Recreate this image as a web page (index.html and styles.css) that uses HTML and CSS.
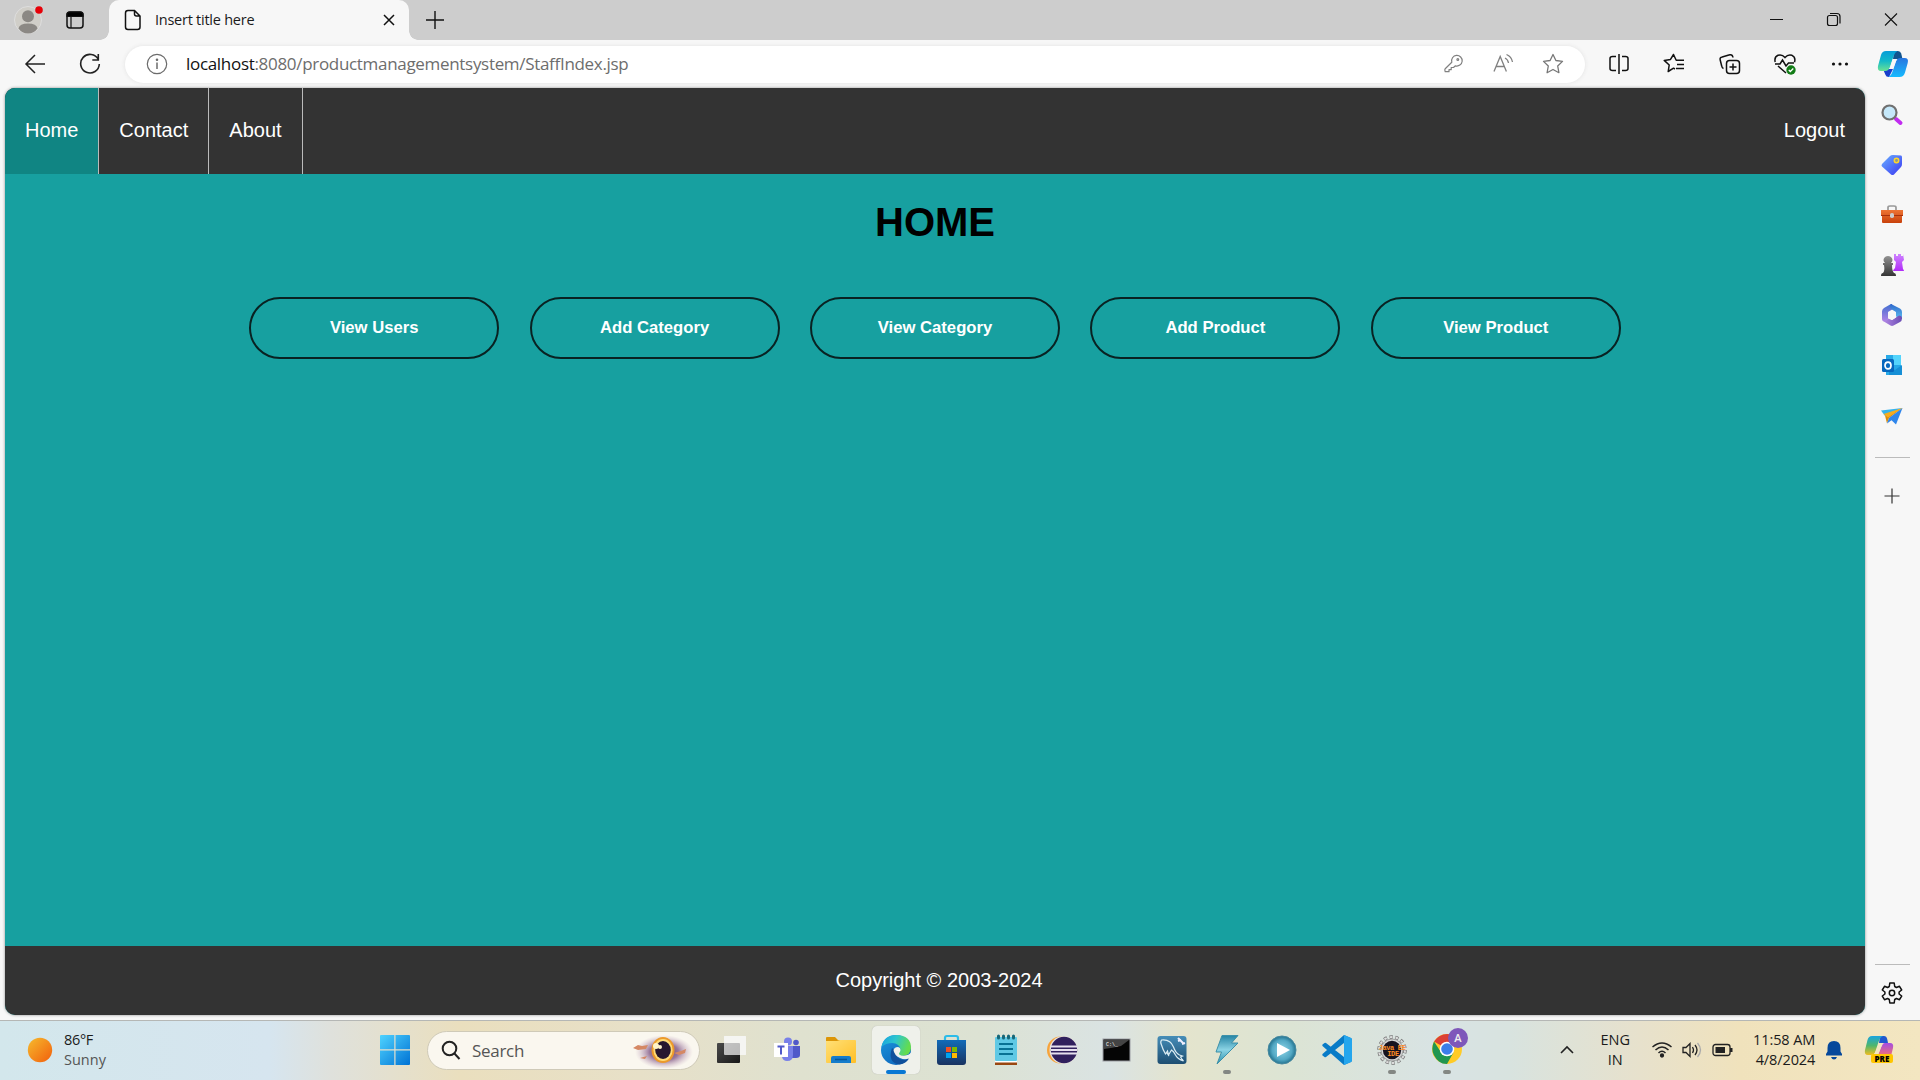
FILE: index.html
```html
<!DOCTYPE html>
<html lang="en">
<head>
<meta charset="utf-8">
<title>Insert title here</title>
<link rel="stylesheet" href="styles.css">
</head>
<body>
<svg class="defs" width="0" height="0" aria-hidden="true">
  <defs>
    <linearGradient id="sun" x1="0" y1="0" x2="1" y2="1"><stop stop-color="#f6bb2e"/><stop offset="1" stop-color="#f25f0c"/></linearGradient>
    <linearGradient id="win" gradientUnits="userSpaceOnUse" x1="0" y1="0" x2="30" y2="30"><stop stop-color="#4fd3ff"/><stop offset="1" stop-color="#0072d4"/></linearGradient>
    <linearGradient id="cyan" x1="0" y1="0" x2="0" y2="1"><stop stop-color="#079dd8"/><stop offset=".5" stop-color="#13b9c9"/><stop offset="1" stop-color="#6be294"/></linearGradient>
    <linearGradient id="blue" x1="0" y1="0" x2="0" y2="1"><stop stop-color="#2875df"/><stop offset="1" stop-color="#16bbff"/></linearGradient>
    <linearGradient id="tag" x1="0" y1="0" x2="1" y2="1"><stop stop-color="#69b1ff"/><stop offset="1" stop-color="#3b36f2"/></linearGradient>
    <linearGradient id="orange" x1="0" y1="0" x2="0" y2="1"><stop stop-color="#ee7434"/><stop offset="1" stop-color="#c8410b"/></linearGradient>
    <linearGradient id="grey" x1="0" y1="0" x2="0" y2="1"><stop stop-color="#929292"/><stop offset="1" stop-color="#353535"/></linearGradient>
    <linearGradient id="purple" x1="0" y1="0" x2="0" y2="1"><stop stop-color="#ce84ff"/><stop offset="1" stop-color="#b12cf8"/></linearGradient>
    <linearGradient id="officeLeft" x1="0" y1="0" x2="0" y2="1"><stop stop-color="#3f6fd0"/><stop offset="1" stop-color="#b083e6"/></linearGradient>
    <linearGradient id="officeRight" x1="0" y1="0" x2="0" y2="1"><stop stop-color="#2f68cc"/><stop offset="1" stop-color="#5cc0f0"/></linearGradient>
    <linearGradient id="officeBottom" x1="0" y1="0" x2="1" y2="0"><stop stop-color="#b58ae6"/><stop offset="1" stop-color="#6a4cb4"/></linearGradient>
    <linearGradient id="folder" x1="0" y1="0" x2="1" y2="1"><stop stop-color="#ffe078"/><stop offset="1" stop-color="#ffbf25"/></linearGradient>
    <linearGradient id="edgeGreen" x1="0" y1="0" x2="1" y2=".3"><stop stop-color="#159fe2"/><stop offset=".5" stop-color="#2dc6cd"/><stop offset="1" stop-color="#64dc4e"/></linearGradient>
    <linearGradient id="edgeBlue" x1="0" y1="0" x2=".6" y2="1"><stop stop-color="#1b98de"/><stop offset="1" stop-color="#0f68bd"/></linearGradient>
    <linearGradient id="store" x1="0" y1="0" x2="0" y2="1"><stop stop-color="#126bb8"/><stop offset="1" stop-color="#193361"/></linearGradient>
    <linearGradient id="sea" x1="0" y1="0" x2="0" y2="1"><stop stop-color="#468db8"/><stop offset="1" stop-color="#1d4e72"/></linearGradient>
    <linearGradient id="bolt" x1="0" y1="0" x2="0" y2="1"><stop stop-color="#2584a4"/><stop offset=".5" stop-color="#8bd3e4"/><stop offset="1" stop-color="#2a90ad"/></linearGradient>
    <linearGradient id="pre" x1="0" y1="0" x2="0" y2="1"><stop stop-color="#19a4df"/><stop offset=".5" stop-color="#4eb66d"/><stop offset="1" stop-color="#f0bd20"/></linearGradient>
    <linearGradient id="preRight" x1="0" y1="0" x2="0" y2="1"><stop stop-color="#a44ce4"/><stop offset="1" stop-color="#f37370"/></linearGradient>
    <linearGradient id="shade" x1="0" y1="0" x2="1" y2="1"><stop stop-color="#4a4a4a"/><stop offset="1" stop-color="#181818"/></linearGradient>
    <radialGradient id="play"><stop stop-color="#8fd6e8"/><stop offset=".7" stop-color="#53a8c4"/><stop offset="1" stop-color="#23728e"/></radialGradient>
    <radialGradient id="haze"><stop stop-color="#5d3562"/><stop offset=".5" stop-color="#8f6a92" stop-opacity=".9"/><stop offset="1" stop-color="#cdb3c8" stop-opacity="0"/></radialGradient>
  </defs>
</svg>

<header class="tabstrip">
  <svg class="avatar" width="32" height="36" viewBox="0 0 32 36"><circle cx="14" cy="20" r="13.500" fill="#d0cec8" stroke="#dedede"/><circle cx="14" cy="16.300" r="6" fill="#8b8884"/><path d="M4.500 28.500q1-5 9.500-5t9.500 5q-3.500 5-9.500 5t-9.500-5" fill="#8b8884"/><circle cx="25" cy="10" r="3.800" fill="#e60008"/></svg>
  <svg class="workspaces" width="20" height="20" viewBox="0 0 20 20"><rect x="2" y="2" width="16" height="16" rx="3" fill="none" stroke="#111" stroke-width="1.500"/><path d="M2 6.500v-2Q2 2 4.500 2h11Q18 2 18 4.500v2zM6 6v12" stroke="#111" stroke-width="1.200"/></svg>
  <div class="tab">
    <svg width="18" height="22" viewBox="0 0 18 22" fill="none" stroke="#111" stroke-width="1.500"><path d="M4 1.500h6.500L16 7v11q0 2.500-2.500 2.500H4Q1.500 20.500 1.500 18V4Q1.500 1.500 4 1.500zM10.500 1.500V5q0 2 2 2H16"/></svg>
    <span class="tab-title">Insert title here</span>
    <svg width="12" height="12" viewBox="0 0 12 12" stroke="#111" stroke-width="1.500"><path d="m1 1 10 10M11 1 1 11"/></svg>
  </div>
  <svg class="newtab" width="18" height="18" viewBox="0 0 18 18" stroke="#111" stroke-width="1.400"><path d="M9 0v18M0 9h18"/></svg>
  <div class="window-controls">
    <svg width="57" height="40" viewBox="0 0 57 40" fill="none" stroke="#111"><path d="M21 19.500h13"/></svg>
    <svg width="57" height="40" viewBox="0 0 57 40" fill="none" stroke="#111" stroke-width="1.200"><rect x="21.500" y="15.500" width="10" height="10" rx="2"/><path d="M24 13.500h7q3 0 3 3v7"/></svg>
    <svg width="57" height="40" viewBox="0 0 57 40" fill="none" stroke="#111" stroke-width="1.100"><path d="m22 13.500 12 12m0-12-12 12"/></svg>
  </div>
</header>

<div class="toolbar">
  <svg class="back" width="22" height="20" viewBox="0 0 22 20" fill="none" stroke="#222" stroke-width="1.500"><path d="M21 10H2m9-9-9 9 9 9"/></svg>
  <svg class="reload" width="22" height="22" viewBox="0 0 22 22" fill="none" stroke="#222" stroke-width="1.600"><path d="M19.300 6.500A9.300 9.300 0 1 0 20.300 11M19.300 1v6h-6"/></svg>
  <div class="address">
    <svg width="22" height="22" viewBox="0 0 22 22" fill="none" stroke="#6b6b6b" stroke-width="1.200"><circle cx="11" cy="11" r="9.700"/><path d="M11 9.500V16" stroke-width="1.500"/><circle cx="11" cy="6.800" r=".7" fill="#666"/></svg>
    <span class="url"><span class="host">localhost</span>:8080/productmanagementsystem/StaffIndex.jsp</span>
    <svg class="tool" width="22" height="22" viewBox="0 0 22 22" fill="none" stroke="#808080" stroke-width="1.200" stroke-linejoin="round"><path d="M9.800 9.200a5.300 5.300 0 1 1 3.600 3.600L11.500 14.500H9.200v2.200H7v2H3.200q-.8-2 0-3z"/><circle cx="15.800" cy="6.500" r=".9"/></svg>
    <svg class="tool" width="22" height="22" viewBox="0 0 22 22" fill="none" stroke="#808080" stroke-width="1.300"><path d="m2 18.500 6.200-15 6.200 15M4.200 13.500h8M13 5q3 1.500 3.500 5M14.500 1.500q5 2 6 7.500"/></svg>
    <svg class="tool" width="22" height="22" viewBox="0 0 22 22" fill="none" stroke="#777" stroke-width="1.300" stroke-linejoin="round"><path d="m11 1.500 2.900 6 6.600.9-4.800 4.600 1.200 6.700-5.900-3.200-5.900 3.200 1.200-6.700L1.500 8.400l6.600-.9z"/></svg>
  </div>
  <div class="actions">
    <svg width="22" height="22" viewBox="0 0 22 22" fill="none" stroke="#111" stroke-width="1.500"><path d="M8 3.500H4.500q-2.500 0-2.500 2v10q0 2 2.500 2H8M14 3.500h3.500q2.500 0 2.500 2v10q0 2-2.500 2H14M11 1v20"/></svg>
    <svg width="22" height="22" viewBox="0 0 22 22" fill="none" stroke="#111" stroke-width="1.500" stroke-linejoin="round"><path d="m12 16-1.500-.8-5.300 3.300 1-6.500-5-4.600 6.300-1L10.500 1.500l2.700 5.800H21M14 11.500h7M13 15.500h8"/></svg>
    <svg width="22" height="22" viewBox="0 0 22 22" fill="none" stroke="#111" stroke-width="1.500"><rect x="7.500" y="7.500" width="13" height="13" rx="3"/><path d="M14 10.500v7m-3.500-3.500h7M4.500 15.500Q3 15 2.700 13L1.200 7q-.7-2.500 2-3L9 2.300l2-.5q2.500-.3 3 2.700"/></svg>
    <svg width="22" height="22" viewBox="0 0 22 22" fill="none" stroke="#111" stroke-width="1.500"><path d="M1.200 9Q0 4 4 2.300 8 1 11 4.500 14 1 18 2.300q4 2 2.500 7M1 11h5l2.500-4 3.500 6 2.500-3H20M4 13l8 7"/><circle cx="17" cy="17" r="4.700" fill="#127c16" stroke="none"/><path d="m14.800 17 1.500 1.500 3-3" stroke="#fff" stroke-width="1.300"/></svg>
    <svg width="22" height="22" viewBox="0 0 22 22" fill="#111"><circle cx="4.500" cy="11" r="1.600"/><circle cx="11" cy="11" r="1.600"/><circle cx="17.500" cy="11" r="1.600"/></svg>
  </div>
  <svg class="copilot" width="32" height="28" viewBox="0 0 32 28"><path d="M17 1h4q2.500 0 3.200 2.500L25.500 9H16z" fill="#12548f"/><path d="M6 19h10l-4 8q-3 0-3.700-2.500z" fill="#173fcb"/><path d="M9 1h11.500Q18 2 16.800 5.500L13 17q-1.200 4-5 4H4q-4 0-3-5L4 5Q5.200 1 9 1z" fill="url(#cyan)"/><path d="M23 8h4.500q4.500 0 3.200 5L28 22.500Q26.700 27 22.500 27h-11q2.500-1 3.700-4.500L19 11.500Q20 8 23 8z" fill="url(#blue)"/><path d="M15.500 9.500H20q-1 1-2 4l-2 5.500h-4q1-1 1.700-3.500z" fill="#f7f7f7"/></svg>
</div>

<main class="workspace">
  <section class="page">
    <nav class="nav"><a class="active">Home</a><a>Contact</a><a>About</a><a class="logout">Logout</a></nav>
    <div class="content">
      <h1>HOME</h1>
      <div class="buttons"><button>View Users</button><button>Add Category</button><button>View Category</button><button>Add Product</button><button>View Product</button></div>
    </div>
    <footer class="footer">Copyright © 2003-2024</footer>
  </section>
  <aside class="sidebar">
    <svg width="24" height="24" viewBox="0 0 24 24"><path d="m16 16 4.500 4" stroke="#c12cf0" stroke-width="4" stroke-linecap="round"/><circle cx="9.500" cy="9.500" r="7" fill="#c5e8fa" stroke="#707070" stroke-width="2.200"/></svg>
    <svg width="24" height="24" viewBox="0 0 24 24"><path d="m2 11 8-8q1-1 3-1l8 .5q1 0 1 2V11q0 2-1 3l-7 7.500q-1.500 1-3 0l-9-8q-1-1 0-2.500z" fill="url(#tag)"/><circle cx="16.500" cy="7.500" r="2.200" fill="#8d9c8b" stroke="#ffd52c" stroke-width="1.500"/></svg>
    <svg width="24" height="24" viewBox="0 0 24 24"><path d="M8 7V4.500Q8 3 10 3h4q2 0 2 1.500V7" fill="none" stroke="#999" stroke-width="1.700"/><path d="M1 7h22v5l-1 1v6q0 1-1 1H3q-1 0-1-1v-6l-1-1z" fill="url(#orange)"/><path d="M1 12.500h22" stroke="#a9310c"/><rect x="10" y="10" width="4" height="5" rx="1.800" fill="#ccc"/></svg>
    <svg width="24" height="24" viewBox="0 0 24 24"><path d="M14 1h2v2h2V1h3v2h2V1l1 6-2 2 1 7q1 1 1 2H13q0-1 2-3l1-6-2-2z" fill="url(#purple)"/><path d="M4 12H3v-2h2Q2 7 5 4q3-2 6 0 3 3 0 6h2v2h-1q0 6 2 8 2 0 2 3H1q0-3 2-3 2-2 1-8z" fill="url(#grey)"/></svg>
    <svg width="24" height="24" viewBox="0 0 24 24"><path d="M11 1 4 5Q2 6.200 2 8.500V16q0 2.500 3 2.500 2.500 0 3-3V9l5-3-1-5z" fill="url(#officeLeft)"/><path d="m11 1 9 4.500q2 1.200 2 3.500v7l-6-2.500V9l-5-3q-2-3 0-5z" fill="url(#officeRight)"/><path d="m3 18 7.500 4.500q1.500.8 3 0L20 19q2-1.200 2-3.500 0-3-3-3l-7 4.500-4-1.500q-1 3-5 2.500z" fill="url(#officeBottom)"/><path d="m12 7.500 4 2.300v4.700l-4 2.500-4-2.500V9.800z" fill="#f7f7f7"/></svg>
    <svg width="24" height="24" viewBox="0 0 24 24"><path d="M6 2h15v20H6z" fill="#27a9e7"/><path d="M13 2h8v10h-8z" fill="#54d4fc"/><path d="m9 14 6 3 7-5v10H9z" fill="#168fd6"/><rect x="2" y="6" width="12" height="13" rx="1.500" fill="#0868be"/><ellipse cx="8" cy="12.500" rx="3" ry="3.400" fill="none" stroke="#fff" stroke-width="1.700"/></svg>
    <svg width="24" height="24" viewBox="0 0 24 24"><path d="M1 6.500 22.500 4 5 12z" fill="#35b3ee"/><path d="M5 11.500 22.500 4 9 14l-2 5.500z" fill="#d98d10"/><path d="M3.500 10 22.500 4 8 13.500z" fill="#f5ac20"/><path d="M22.500 4 16 20.500l-4.500-4.200L7 19.500 9 14z" fill="#2f86ec"/></svg>
    <i class="divider"></i>
    <svg class="plus" width="16" height="16" viewBox="0 0 16 16" stroke="#333" stroke-width="1.200"><path d="M8 .5v15M.5 8h15"/></svg>
    <i class="divider lower"></i>
    <svg class="gear" width="22" height="22" viewBox="0 0 22 22" fill="none" stroke="#111" stroke-width="1.500" stroke-linejoin="round"><path d="M8.800 1h4.400l.5 3.500 1.700 1 3.100-1.200 2.200 3.700-2.600 2v2l2.600 2-2.200 3.700-3.100-1.200-1.700 1-.5 3.500H8.800l-.5-3.500-1.700-1-3.100 1.200-2.200-3.700 2.600-2v-2l-2.600-2 2.200-3.700 3.100 1.200 1.700-1z"/><circle cx="11" cy="11" r="2.700"/></svg>
  </aside>
</main>

<footer class="taskbar">
  <div class="weather"><svg width="26" height="26" viewBox="0 0 26 26"><circle cx="13" cy="13" r="12.200" fill="url(#sun)"/></svg><p><span>86°F</span><span class="muted">Sunny</span></p></div>
  <svg class="start" width="30" height="30" viewBox="0 0 30 30" fill="url(#win)"><path d="M0 1q0-1 1-1h13.300v14.300H0zM15.500 0H29q1 0 1 1v13.300H15.500zM0 15.500h14.300V30H1q-1 0-1-1zM15.500 15.500H30V29q0 1-1 1H15.500z"/></svg>
  <div class="search"><svg width="20" height="20" viewBox="0 0 20 20" fill="none" stroke="#222" stroke-width="2"><circle cx="8.500" cy="8.500" r="6.800"/><path d="m13 13 5.500 6"/></svg><span>Search</span>
    <svg class="eye" width="64" height="36" viewBox="0 0 64 36"><ellipse cx="34" cy="20" rx="29" ry="17" fill="url(#haze)"/><path d="M3 16l5-3 4 1 6-1-2 4-8 1zM44 21l7-2 5-2-1 4-6 2zM10 26l7-2-2 3z" fill="#d58864"/><ellipse cx="33" cy="18" rx="11.500" ry="13" fill="#ec9a2b"/><ellipse cx="33" cy="18" rx="9.600" ry="11" fill="#ffdb78"/><ellipse cx="33" cy="18" rx="7.800" ry="9" fill="#27172f"/><circle cx="26" cy="14" r="3" fill="#fff3c8"/><circle cx="30" cy="15" r="2" fill="#fff3c8"/></svg></div>
  <div class="apps">
    <span><svg width="32" height="32" viewBox="0 0 32 32"><rect x="2" y="9" width="23" height="20" rx="1" fill="url(#shade)"/><rect x="9" y="2" width="22" height="19" rx="1" fill="#f4f4f4" fill-opacity=".72"/><path d="M25 2h6v19h-6zM9 2h22v7H9z" fill="#f7f7f7" fill-opacity=".65"/></svg></span>
    <span><svg width="32" height="32" viewBox="0 0 32 32"><circle cx="18" cy="7.500" r="4" fill="#7880e8"/><circle cx="26" cy="8.500" r="2.800" fill="#5059c9"/><path d="M20 12h10v9q0 3-4 3h-6z" fill="#5059c9"/><path d="M13 12h10v9q0 6-6 6-4 0-5-4z" fill="#7880e8"/><rect x="4" y="9" width="14" height="14" fill="#fff"/><path d="M7.500 12.500h7M11 12.500v8" stroke="#5059c9" stroke-width="2"/></svg></span>
    <span><svg width="32" height="32" viewBox="0 0 32 32"><path d="M1 4q0-1 1-1h8l3 3h17v7H1z" fill="#dc9608"/><path d="M1 7h11l3-1h15q1 0 1 1v21q0 1-1 1H2q-1 0-1-1z" fill="url(#folder)"/><path d="M6 29v-5q0-2 2-2h16q2 0 2 2v5z" fill="#157ccb"/><path d="M10 25.500h12" stroke="#075798" stroke-width="1.500"/></svg></span>
    <span class="active"><svg width="32" height="32" viewBox="0 0 32 32"><circle cx="16" cy="16" r="15" fill="url(#edgeBlue)"/><path d="M12 14q-5 15 8 16.500 6-1 9-6-5 2.500-9 .5-5-3-4.500-8z" fill="#0f509c"/><path d="M13.500 16q1-3 4.500-3 3 .500 3 3.500 0 1.500-1 2.500-.5 2.500 4 2.500 5 0 7-3V24l-2 .300q-4 2-9-.300-6-3-6.500-8z" fill="#eff1eb"/><path d="M1.500 13Q3.500 1 16.500 1 31 1.500 31 14q-.5 7.500-8 7.500-4 0-4-2 2-2.500 1.500-4.500-1.500-5.500-8-6-7 0-11 4z" fill="url(#edgeGreen)"/></svg><i></i></span>
    <span><svg width="32" height="32" viewBox="0 0 32 32"><path d="M10 7V4q0-2 2-2h9q2 0 2 2v3" fill="none" stroke="#2bbce9" stroke-width="2.200"/><path d="M2 6h29v22q0 3-3 3H5q-3 0-3-3z" fill="url(#store)"/><path d="M11 13h5v5h-5z" fill="#f25022"/><path d="M17 13h5v5h-5z" fill="#7fba00"/><path d="M11 19h5v5h-5z" fill="#00a4ef"/><path d="M17 19h5v5h-5z" fill="#ffb900"/></svg></span>
    <span><svg width="32" height="32" viewBox="0 0 32 32"><path d="M5 26h22v5H5z" fill="#994711"/><path d="M5 25h22v3.500H5z" fill="#fff"/><rect x="5" y="3" width="22" height="24" rx="1" fill="#60c9e5"/><path d="M9 10h14M9 15h14M9 20h14" stroke="#087294" stroke-width="1.800"/><path d="M8.500 2v2m5-2v2m5-2v2m5-2v2" stroke="#176778" stroke-width="3" stroke-linecap="round"/></svg></span>
    <span><svg width="32" height="32" viewBox="0 0 32 32"><circle cx="14.500" cy="16" r="13.500" fill="#f7a43b"/><circle cx="17.500" cy="16" r="14" fill="#e7e3dc"/><circle cx="18" cy="16" r="13.200" fill="#30205d"/><path d="M5 12.500h26M5 16h26M5 19.500h26" stroke="#e6e0ee" stroke-width="1.800"/></svg></span>
    <span><svg width="32" height="32" viewBox="0 0 32 32"><rect x="2" y="5" width="27" height="22" fill="#050505" stroke="#9b9da3"/><path d="M3 6h25l-8 6q-9 2-17 3z" fill="#444"/><text x="5" y="12" fill="#fff" font-size="5" font-family="Liberation Mono">C:\_</text></svg></span>
    <span><svg width="32" height="32" viewBox="0 0 32 32"><rect x="1.500" y="2" width="29" height="28" rx="3" fill="url(#sea)"/><path d="M5.500 6q9-1 12 7 2 6 6 8l3 1-2 1q2 3 3 4-6-2-8-6-2-4-4-5l-3 5-1-4-2 3Q7 16 5.500 11 4 8 5.500 6zM11 19l2 3" fill="none" stroke="#dcedf4" stroke-width="1.200"/><path d="m22 4 5 5m-5-2 3-1m1 4 3-1" stroke="#eef" stroke-width="2"/></svg></span>
    <span><svg width="32" height="32" viewBox="0 0 32 32"><path d="M11 1.500h16l-6.500 7.500H27L6 30l4.500-12H5z" fill="url(#bolt)" stroke="#3d91aa"/></svg><i></i></span>
    <span><svg width="32" height="32" viewBox="0 0 32 32"><circle cx="16" cy="16" r="14" fill="url(#play)" stroke="#4789a0"/><path d="m11 9 13 7-13 7z" fill="#fff"/></svg></span>
    <span><svg width="32" height="32" viewBox="0 0 32 32"><path d="m23 1 7 3q1 .5 1 2v20q0 1.500-1 2l-7 3L1.500 12q-.5-1 0-1.500L3.500 9q1-.500 1.500 0L23 23V9L5 23q-1 .500-1.500 0l-2-1.500q-.5-.5 0-1.500z" fill="#087bc7"/><path d="m23 1 7 3q1 .5 1 2v20q0 1.500-1 2l-7 3z" fill="#25a6ed"/></svg></span>
    <span><svg width="32" height="32" viewBox="0 0 32 32"><circle cx="16" cy="16" r="13" fill="none" stroke="#777" stroke-width="3.500" stroke-dasharray="3.300 2.535"/><circle cx="16" cy="16" r="13" fill="none" stroke="#ddd" stroke-width="2" stroke-dasharray="2.500 3.335" stroke-dashoffset="-.4"/><circle cx="16" cy="16" r="11" fill="#d8d8d8" stroke="#888" stroke-width=".7"/><circle cx="16" cy="16" r="9.200" fill="#17131f"/><text class="ide" x="16" y="15.500" text-anchor="middle">Java EE</text><text class="ide" x="17" y="21.500" text-anchor="middle">IDE</text></svg><i></i></span>
    <span><svg class="chrome" width="40" height="38" viewBox="0 0 40 38"><circle cx="16" cy="22" r="15" fill="#ffcb27"/><path d="M16 22 3 14.500Q8 7 16 7q9 0 13 7.500z" fill="#dc4035"/><path d="M3 14.500Q-2 26 8 34.500q3 2.500 8 2.500l6.500-11.500-12 .500z" fill="#209650"/><circle cx="16" cy="22" r="7.300" fill="#fff"/><circle cx="16" cy="22" r="5.800" fill="#3b7eea"/><circle cx="27" cy="11" r="10" fill="#7e57ba"/><text x="27" y="15" text-anchor="middle" fill="#eee" font-family="Open Sans" font-weight="600" font-size="11">A</text></svg><i></i></span>
  </div>
  <div class="tray">
    <svg width="16" height="12" viewBox="0 0 16 12" fill="none" stroke="#222" stroke-width="1.600"><path d="m2 9 6-6 6 6"/></svg>
    <p class="language"><span>ENG</span><span>IN</span></p>
    <svg class="wifi" width="22" height="18" viewBox="0 0 22 18" fill="none" stroke="#222" stroke-width="1.500"><path d="M1.500 6Q11-2 20.500 6M4.500 9Q11 3 17.500 9M7.500 12Q11 8.500 14.500 12"/><circle cx="11" cy="14.500" r="1.400" fill="#222"/></svg>
    <svg class="sound" width="20" height="18" viewBox="0 0 20 18" fill="none" stroke="#222" stroke-width="1.300"><path d="M1 6.500v5h3l4 4v-13l-4 4zM10.500 6q2 3 0 6M13 4q4 5 0 10"/><path d="M15.500 2q6 7 0 14" stroke="#aaa"/></svg>
    <svg class="battery" width="21" height="14" viewBox="0 0 21 14"><rect x="1" y="1.500" width="17" height="11" rx="2.500" fill="none" stroke="#222" stroke-width="1.300"/><rect x="3.500" y="4" width="9.500" height="6" fill="#222"/><path d="M18 5h2.500v4H18" fill="#222"/></svg>
    <p class="clock"><span>11:58 AM</span><span>4/8/2024</span></p>
    <svg class="bell" width="18" height="20" viewBox="0 0 18 20" fill="#06489b"><path d="M1 15.500V14l1.500-2.500V8Q2.500 1 9 1t6.500 7v3.500L17 14v1.500zM6 17h6q-1 2.500-3 2.500T6 17"/></svg>
    <svg class="preview" width="32" height="30" viewBox="0 0 32 30"><path d="M16 1h4q2.500 0 3.200 3L24 8h-9z" fill="#2058cf"/><path d="M8 1h11q-3 1-4.500 6l-3 9q-1 4-4.500 4H4q-4 0-3-5L3.500 5Q4.500 1 8 1z" fill="url(#pre)"/><path d="M21 8h5q4 0 3 5l-2 8H12q3-2 4-6l1.500-3.500Q18.500 8 21 8z" fill="url(#preRight)"/><path d="M14.500 9.500h4.300q-1.300 1-2 3.500L14.500 19h-4z" fill="#f4e6c2"/><rect x="7" y="19" width="22" height="9" rx="2" fill="#ffc600"/><text x="18" y="26.500" text-anchor="middle" font-family="Open Sans" font-size="8" font-weight="800">PRE</text></svg>
  </div>
</footer>
</body>
</html>
```
FILE: styles.css
```css
* { box-sizing: border-box; }
body { margin: 0; width: 1920px; height: 1080px; overflow: hidden; display: flex; flex-direction: column; background: #f7f7f7; font-family: "Open Sans", "Noto Sans", sans-serif; color: #1b1b1b; }
svg { display: block; flex: none; }
p { margin: 0; }
p span { display: block; }
.defs { position: absolute; }

.tabstrip { height: 40px; flex: none; display: flex; align-items: center; background: #cdcdcd; }
.avatar { margin-left: 14px; align-self: flex-start; }
.workspaces { margin-left: 19px; }
.tab { width: 300px; height: 40px; margin-left: 24px; padding: 0 14px 0 15px; display: flex; align-items: center; background: #f7f7f7; border-radius: 10px 10px 0 0; position: relative; }
.tab::before, .tab::after { content: ""; position: absolute; bottom: 0; width: 9px; height: 9px; }
.tab::before { left: -9px; background: radial-gradient(circle at 0 0, transparent 8.5px, #f7f7f7 9px); }
.tab::after { right: -9px; background: radial-gradient(circle at 100% 0, transparent 8.5px, #f7f7f7 9px); }
.tab-title { flex: 1; margin-left: 13px; padding-bottom: 2px; font-size: 14.5px; letter-spacing: -.25px; white-space: nowrap; }
.newtab { margin-left: 17px; }
.window-controls { margin-left: auto; display: flex; }

.toolbar { height: 48px; flex: none; display: flex; align-items: center; }
.back { margin-left: 24px; }
.reload { margin-left: 33px; }
.address { width: 1460px; height: 37px; margin-left: 24px; padding: 0 21px; display: flex; align-items: center; background: #fff; border-radius: 19px; box-shadow: 0 0 4px #e2e2e2; }
.url { margin-left: 18px; margin-right: auto; padding-bottom: 2px; font-size: 17px; letter-spacing: -.31px; color: #6d6d6d; white-space: nowrap; }
.host { color: #111; }
.tool + .tool { margin-left: 28px; }
.actions { display: flex; gap: 33.3px; margin-left: 23px; }
.copilot { margin-left: 26px; }

.workspace { height: 932px; flex: none; display: flex; }
.page { width: 1860px; height: 927px; margin-left: 5px; overflow: hidden; display: flex; flex-direction: column; border-radius: 10px; background: #17a0a0; box-shadow: 0 0 3px #888; font-family: "Liberation Sans", Arial, sans-serif; }
.nav { height: 86px; flex: none; display: flex; background: #333; font-size: 20px; color: #fff; }
.nav a { padding: 0 20px 1px; display: flex; align-items: center; border-right: 1px solid #bbb; }
.nav .active { background: #108583; }
.nav .logout { margin-left: auto; border: 0; }
.content { flex: 1; text-align: center; }
h1 { margin: 25px 0 0; font-size: 40px; line-height: 46px; color: #000; }
.buttons { margin-top: 52px; display: flex; justify-content: center; gap: 30.4px; }
button { width: 250px; height: 62px; padding: 0; border: 2px solid #092222; border-radius: 31px; background: transparent; color: #fff; font: bold 16.67px "Liberation Sans", Arial, sans-serif; }
.footer { height: 69px; flex: none; padding: 23px 0 0 8px; background: #333; color: #fff; font-size: 20px; line-height: 23px; text-align: center; }
.sidebar { width: 55px; display: flex; flex-direction: column; align-items: center; padding: 15px 1px 0 0; gap: 26.1px; }
.divider { width: 35px; height: 1px; background: #bbb; margin-top: 3px; }
.plus { margin-top: 4px; }
.lower { margin-top: auto; }
.gear { margin: -9px 0 16px; }

.taskbar { height: 60px; flex: none; display: flex; align-items: center; padding-bottom: 1px; border-top: 1px solid #b5b7b5; background: linear-gradient(90deg, #d3e7ec 0, #d6e5ef 270px, #dfe1dc 330px, #eadfbe 460px, #e7e0c8 640px, #dfe1cf 800px, #dce2d3 980px, #dae3e3 1110px, #e4e4cd 1185px, #dce4d4 1290px, #d8e3e4 1440px, #d8e3df 1510px, #e7e1cc 1640px, #f0e2bc 1740px, #f3e6c1 1920px); }
.weather { width: 380px; padding-left: 27px; display: flex; align-items: center; gap: 11px; font-size: 14.5px; line-height: 20px; letter-spacing: -.35px; }
.muted { color: #555; letter-spacing: 0; }
.search { width: 273px; height: 39px; margin: 0 5px 0 17px; padding: 0 5px 0 13px; display: flex; align-items: center; background: #faf7ef; border: 1px solid #cfcab8; border-radius: 20px; font-size: 17px; letter-spacing: -.3px; color: #555; }
.search span { margin-left: 11px; }
.eye { margin-left: auto; }
.apps { display: flex; gap: 7.1px; margin-left: 2px; }
.apps span { width: 48px; height: 48px; position: relative; display: flex; align-items: center; justify-content: center; border-radius: 5px; }
.apps .active { background: #eff1eb; box-shadow: 0 0 1px #aaa; }
.apps i { position: absolute; left: 20px; bottom: 0; width: 8px; height: 4px; border-radius: 2px; background: #838783; }
.apps .active i { left: 14px; width: 20px; background: #0878d4; }
.chrome { margin: -8px 0 0 8px; }
.ide { font: bold 7px "Liberation Mono", monospace; letter-spacing: -.4px; fill: #ff8b25; }
.tray { flex: 1; display: flex; align-items: center; padding-left: 88px; font-size: 14.5px; line-height: 20px; }
.language { width: 38px; margin-left: 21px; text-align: center; }
.wifi { margin-left: 17px; }
.sound { margin-left: 9px; }
.battery { margin-left: 10px; }
.clock { width: 82px; text-align: right; letter-spacing: -.1px; white-space: nowrap; }
.bell { margin-left: 10px; }
.preview { margin-left: 21px; }
```
